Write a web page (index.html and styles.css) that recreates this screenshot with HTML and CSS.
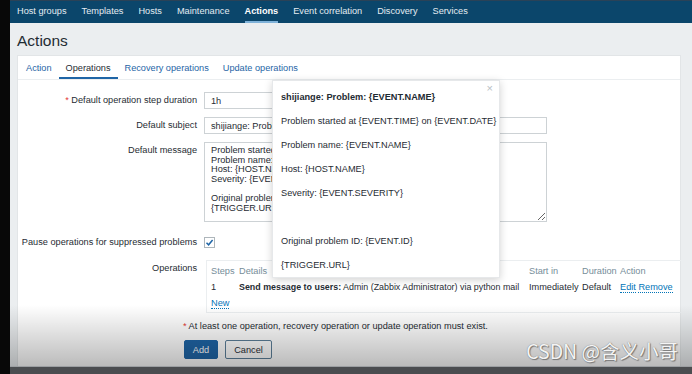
FILE: index.html
```html
<!DOCTYPE html>
<html lang="en">
<head>
    <meta charset="UTF-8">
    <title>Actions</title>
    <link rel="stylesheet" href="styles.css">
</head>
<body>
    <div class="screen">
        <div class="edge"></div>
        <div class="app">
            <nav class="topnav">
                <a href="#">Host groups</a>
                <a href="#">Templates</a>
                <a href="#">Hosts</a>
                <a href="#">Maintenance</a>
                <a href="#" class="current">Actions</a>
                <a href="#">Event correlation</a>
                <a href="#">Discovery</a>
                <a href="#">Services</a>
            </nav>

            <header class="page-head">
                <h1>Actions</h1>
            </header>

            <main class="panel">
                <ul class="tabs">
                    <li><a href="#">Action</a></li>
                    <li class="active"><a href="#">Operations</a></li>
                    <li><a href="#">Recovery operations</a></li>
                    <li><a href="#">Update operations</a></li>
                </ul>

                <div class="form">
                    <div class="row">
                        <label class="label"><span class="req">*</span> Default operation step duration</label>
                        <div class="field"><input type="text" class="input short" value="1h"></div>
                    </div>
                    <div class="row">
                        <label class="label">Default subject</label>
                        <div class="field"><input type="text" class="input wide" value="shijiange: Problem: {EVENT.NAME}"></div>
                    </div>
                    <div class="row">
                        <label class="label">Default message</label>
                        <div class="field">
                            <textarea class="message">Problem started at {EVENT.TIME} on {EVENT.DATE}
Problem name: {EVENT.NAME}
Host: {HOST.NAME}
Severity: {EVENT.SEVERITY}

Original problem ID: {EVENT.ID}
{TRIGGER.URL}</textarea>
                        </div>
                    </div>
                    <div class="row row-check">
                        <label class="label">Pause operations for suppressed problems</label>
                        <div class="field">
                            <span class="checkbox">
                                <svg width="9" height="9" viewBox="0 0 9 9"><path d="M1.5 4.8 L3.6 6.8 L7.6 2" fill="none" stroke="#1f65a6" stroke-width="1.5"/></svg>
                            </span>
                        </div>
                    </div>
                    <div class="row row-ops">
                        <label class="label">Operations</label>
                        <div class="field">
                            <div class="ops">
                                <div class="ops-grid ops-head">
                                    <span>Steps</span><span>Details</span><span>Start in</span><span>Duration</span><span>Action</span>
                                </div>
                                <div class="ops-grid">
                                    <span>1</span>
                                    <span class="details"><b>Send message to users:</b> Admin (Zabbix Administrator) via python mail</span>
                                    <span>Immediately</span>
                                    <span>Default</span>
                                    <span><a href="#" class="link">Edit</a> <a href="#" class="link">Remove</a></span>
                                </div>
                                <div class="ops-grid">
                                    <span><a href="#" class="link">New</a></span>
                                </div>
                            </div>
                        </div>
                    </div>

                    <p class="note"><span class="req">*</span> At least one operation, recovery operation or update operation must exist.</p>

                    <div class="buttons">
                        <button type="button" class="btn btn-main">Add</button>
                        <button type="button" class="btn btn-alt">Cancel</button>
                    </div>
                </div>
            </main>
        </div>

        <!-- macro hint popup -->
        <div class="popup">
            <span class="close">&times;</span>
            <p class="bold">shijiange: Problem: {EVENT.NAME}</p>
            <p>Problem started at {EVENT.TIME} on {EVENT.DATE}</p>
            <p>Problem name: {EVENT.NAME}</p>
            <p>Host: {HOST.NAME}</p>
            <p>Severity: {EVENT.SEVERITY}</p>
            <p>&nbsp;</p>
            <p>Original problem ID: {EVENT.ID}</p>
            <p>{TRIGGER.URL}</p>
        </div>

        <div class="shade"></div>
        <div class="bottom-bar"></div>
        <div class="watermark">CSDN @含义小哥</div>
    </div>
</body>
</html>
```

FILE: styles.css
```css
/* zabbix-ish action form, scaled down */
body {
    margin: 0;
    background: #000;
    font-family: 'Liberation Sans', Arial, sans-serif;
    font-size: 9.2px;
    color: #1f2c33;
}

.screen {
    position: relative;
    display: flex;
    width: 692px;
    height: 374px;
    overflow: hidden;
    background: #ebeef0;
}

.edge {
    width: 10px;
    flex: none;
    background: #080808;
}

.app {
    flex: 1;
    display: flex;
    flex-direction: column;
}

.topnav {
    height: 22px;
    border-top: 1px solid #2a4257;
    background: #0b466b;
    display: flex;
    gap: 15px;
    padding-left: 7px;
}

.topnav a {
    color: #e4ecf2;
    text-decoration: none;
    line-height: 21px;
    border-bottom: 2px solid transparent;
}

.topnav a.current {
    color: #fff;
    font-weight: bold;
    border-bottom-color: #7fb2d9;
}

.page-head {
    height: 32px;
    padding-left: 7px;
}

h1 {
    margin: 0;
    font-size: 15.5px;
    font-weight: normal;
    line-height: 35px;
    color: #1f2c33;
}

.panel {
    flex: 1;
    margin-left: 7px;
    width: 664px;
    background: #fff;
    border: 1px solid #e2e5e7;
    border-bottom: none;
    box-sizing: border-box;
}

.tabs {
    list-style: none;
    margin: 0;
    padding: 0 0 0 1px;
    display: flex;
    height: 23px;
    border-bottom: 1px solid #ebeef0;
}

.tabs li {
    padding: 0 7px;
    border-bottom: 2px solid transparent;
}

.tabs li a {
    color: #1f65a6;
    text-decoration: none;
    line-height: 25px;
}

.tabs li.active {
    border-bottom-color: #1f65a6;
}

.tabs li.active a {
    color: #1f2c33;
}

.form {
    padding-top: 12px;
}

.row {
    display: flex;
    margin-bottom: 8px;
}

.label {
    width: 179px;
    flex: none;
    text-align: right;
    line-height: 17px;
    padding-right: 7px;
}

.row-check {
    align-items: center;
    margin-top: 15px;
    margin-bottom: 12px;
}

.row-check .label {
    line-height: 11px;
    padding-right: 4px;
}

.row-ops {
    margin-bottom: 0;
}

.req {
    color: #e33734;
}

.input {
    height: 17px;
    box-sizing: border-box;
    border: 1px solid #cdd2d5;
    padding: 0 6px;
    font-family: inherit;
    font-size: 9.2px;
    color: #1f2c33;
    outline: none;
}

.input.short {
    width: 90px;
}

.input.wide {
    width: 343px;
}

.message {
    display: block;
    width: 343px;
    height: 80px;
    box-sizing: border-box;
    border: 1px solid #cdd2d5;
    padding: 3px 6px;
    margin: 0;
    font-family: inherit;
    font-size: 9.2px;
    line-height: 9.6px;
    color: #1f2c33;
    resize: both;
    outline: none;
}

.checkbox {
    display: flex;
    align-items: center;
    justify-content: center;
    width: 11px;
    height: 11px;
    box-sizing: border-box;
    border: 1px solid #aeb6bb;
    margin-left: 3px;
}

.ops {
    width: 476px;
    margin-left: 2px;
    box-sizing: border-box;
    border: 1px solid #ebeef0;
    padding: 2px 4px 1px;
}

.ops-grid {
    display: grid;
    grid-template-columns: 28px 290px 53px 38px auto;
    line-height: 16px;
}

.ops-head {
    color: #768d99;
}

.details {
    white-space: nowrap;
    font-size: 8.9px;
}

.link {
    color: #0275b8;
    text-decoration: none;
    border-bottom: 1px dotted #0275b8;
}

.note {
    margin: 5px 0 0 165px;
    line-height: 17px;
}

.buttons {
    display: flex;
    gap: 7px;
    margin: 5px 0 0 166px;
}

.btn {
    height: 19px;
    box-sizing: border-box;
    border-radius: 2px;
    font-family: inherit;
    font-size: 9.2px;
    padding: 0;
    cursor: pointer;
}

.btn-main {
    width: 34px;
    background: #1f65a6;
    border: 1px solid #1f65a6;
    color: #fff;
}

.btn-alt {
    width: 47px;
    background: #fff;
    border: 1px solid #5c7f99;
    color: #1f2c33;
}

.popup {
    position: absolute;
    left: 272px;
    top: 80px;
    width: 228px;
    height: 198px;
    box-sizing: border-box;
    padding: 4px 8px 0;
    background: #fff;
    border: 1px solid #e6e8ea;
    box-shadow: 0 2px 8px rgba(0, 0, 0, 0.18);
}

.popup p {
    margin: 0;
    line-height: 24px;
    white-space: nowrap;
}

.popup .bold {
    font-weight: bold;
}

.popup .close {
    position: absolute;
    right: 6px;
    top: 1px;
    color: #b8c0c5;
    font-size: 11px;
}

/* video overlay at the bottom */
.shade {
    position: absolute;
    left: 10px;
    right: 0;
    top: 305px;
    height: 62px;
    background: linear-gradient(to bottom, rgba(0, 0, 0, 0), rgba(0, 0, 0, 0.27));
}

.bottom-bar {
    position: absolute;
    left: 10px;
    right: 0;
    bottom: 0;
    height: 7px;
    background: #4b4d50;
    border-top: 1px solid #9c9fa2;
}

.watermark {
    position: absolute;
    right: 14px;
    top: 338px;
    font-family: 'Noto Sans CJK SC', 'Noto Sans', sans-serif;
    font-size: 19.5px;
    line-height: 26px;
    color: #f4f4f4;
    text-shadow: 0 0 1px #6a6a6a, 1px 1px 1px #777;
}
```
